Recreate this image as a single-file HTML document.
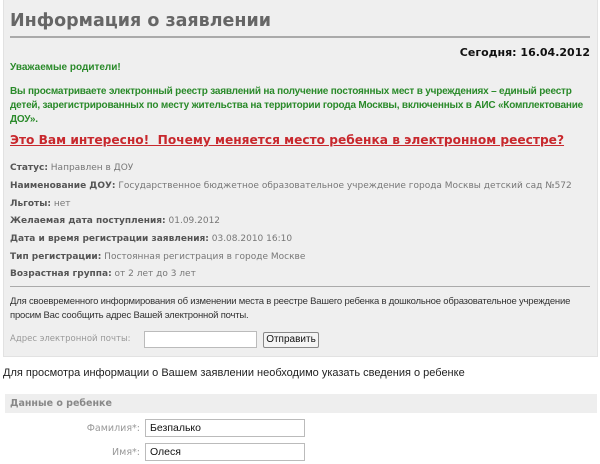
<!DOCTYPE html>
<html><head><meta charset="utf-8"><style>
*{margin:0;padding:0;box-sizing:border-box}
body{width:600px;height:464px;background:#fff;position:relative;overflow:hidden;font-family:"Liberation Sans",sans-serif}
.a{position:absolute;white-space:nowrap}
#panel{position:absolute;left:3px;top:0;width:595px;height:357px;background:#efefef;border:1px solid #e2e2e2;border-top:none}
.v{font-family:"DejaVu Sans",sans-serif}
.g{color:#2a8a2a;font-weight:bold;font-size:10px}
.row{font-family:"DejaVu Sans",sans-serif;font-size:9px;color:#777}
.row b{color:#555}
.inp{position:absolute;background:#fff;border:1px solid #bbb;height:17px;font-size:10.5px;padding:2px 4px;color:#111}
</style></head><body>
<div id="panel"></div>
<div class="a v" style="left:10px;top:11px;font-size:17.5px;font-weight:bold;color:#666">Информация о заявлении</div>
<div class="a" style="left:10px;top:36px;width:580px;height:2px;background:#aaa"></div>
<div class="a v" style="right:10px;top:46px;font-size:11px;font-weight:bold;color:#111">Сегодня: 16.04.2012</div>
<div class="a g" style="left:10px;top:62px">Уважаемые родители!</div>
<div class="a g" style="left:10px;top:86px;letter-spacing:-0.2px">Вы просматриваете электронный реестр заявлений на получение постоянных мест в учреждениях – единый реестр</div>
<div class="a g" style="left:10px;top:100px;letter-spacing:-0.2px">детей, зарегистрированных по месту жительства на территории города Москвы, включенных в АИС «Комплектование</div>
<div class="a g" style="left:10px;top:114px;letter-spacing:-0.2px">ДОУ».</div>
<div class="a v" style="left:10px;top:133px;font-size:12.2px;font-weight:bold;color:#c8282d;text-decoration:underline">Это Вам интересно!&nbsp; Почему меняется место ребенка в электронном реестре?</div>
<div class="a row" style="left:10px;top:163px"><b>Статус:</b> Направлен в ДОУ</div>
<div class="a row" style="left:10px;top:181px"><b>Наименование ДОУ:</b> Государственное бюджетное образовательное учреждение города Москвы детский сад №572</div>
<div class="a row" style="left:10px;top:199px"><b>Льготы:</b> нет</div>
<div class="a row" style="left:10px;top:216px"><b>Желаемая дата поступления:</b> 01.09.2012</div>
<div class="a row" style="left:10px;top:234px"><b>Дата и время регистрации заявления:</b> 03.08.2010 16:10</div>
<div class="a row" style="left:10px;top:252px"><b>Тип регистрации:</b> Постоянная регистрация в городе Москве</div>
<div class="a row" style="left:10px;top:269px"><b>Возрастная группа:</b> от 2 лет до 3 лет</div>
<div class="a" style="left:10px;top:286px;width:580px;height:1px;background:#aaa"></div>
<div class="a" style="left:10px;top:296px;font-size:9.5px;color:#333;letter-spacing:-0.2px">Для своевременного информирования об изменении места в реестре Вашего ребенка в дошкольное образовательное учреждение</div>
<div class="a" style="left:10px;top:310px;font-size:9.5px;color:#333;letter-spacing:-0.2px">просим Вас сообщить адрес Вашей электронной почты.</div>
<div class="a v" style="left:10px;top:334px;font-size:8.5px;color:#999">Адрес электронной почты:</div>
<div class="inp" style="left:144px;top:331px;width:113px;height:17px"></div>
<div class="a" style="left:263px;top:332px;width:56px;height:16px;border:1px solid #888;border-radius:2px;background:#f4f4f4;font-size:10px;color:#111;text-align:center;line-height:14px">Отправить</div>
<div class="a" style="left:3px;top:367px;font-size:11px;color:#222">Для просмотра информации о Вашем заявлении необходимо указать сведения о ребенке</div>
<div class="a" style="left:5px;top:394px;width:592px;height:19px;background:#eeeeee"></div>
<div class="a v" style="left:10px;top:398px;font-size:9.5px;font-weight:bold;color:#888">Данные о ребенке</div>
<div class="a v" style="right:460px;top:423px;font-size:9.5px;color:#999">Фамилия*:</div>
<div class="inp" style="left:145px;top:419px;width:160px;height:18px">Безпалько</div>
<div class="a v" style="right:460px;top:447px;font-size:9.5px;color:#999">Имя*:</div>
<div class="inp" style="left:145px;top:443px;width:160px;height:18px">Олеся</div>
</body></html>
